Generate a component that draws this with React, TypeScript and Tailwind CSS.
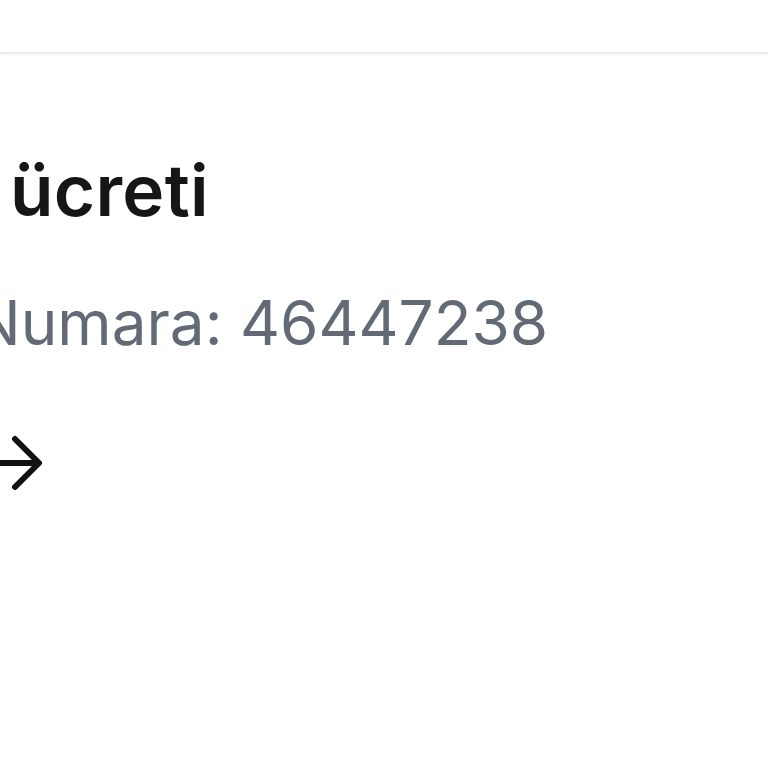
import React from 'react';

export default function App() {
  return (
    <div className="w-[768px] h-[768px] overflow-hidden bg-white" style={{ fontFamily: 'Inter, "Noto Sans", sans-serif' }}>
      <div className="h-[54px] border-b-2 border-[#ececec] shadow-[0_2px_3px_rgba(0,0,0,0.03)]" />
      <div className="flex flex-col">
        <h1 className="mt-[96px] ml-[10px] text-[71px] leading-[80px] font-semibold tracking-[0.3px] text-[#161616]">ücreti</h1>
        <p className="mt-[55px] -ml-[26px] text-[62px] leading-[76px] font-normal whitespace-nowrap text-[#636a75]">Numara: 46447238</p>
        <div className="mt-[74px] -ml-[30px]">
          <svg width="74" height="56" viewBox="0 0 74 56" fill="none" stroke="#111" strokeWidth="6" strokeLinecap="round" strokeLinejoin="round">
            <path d="M0 28h68" />
            <path d="M45 4l24 24-24 24" />
          </svg>
        </div>
      </div>
    </div>
  );
}
